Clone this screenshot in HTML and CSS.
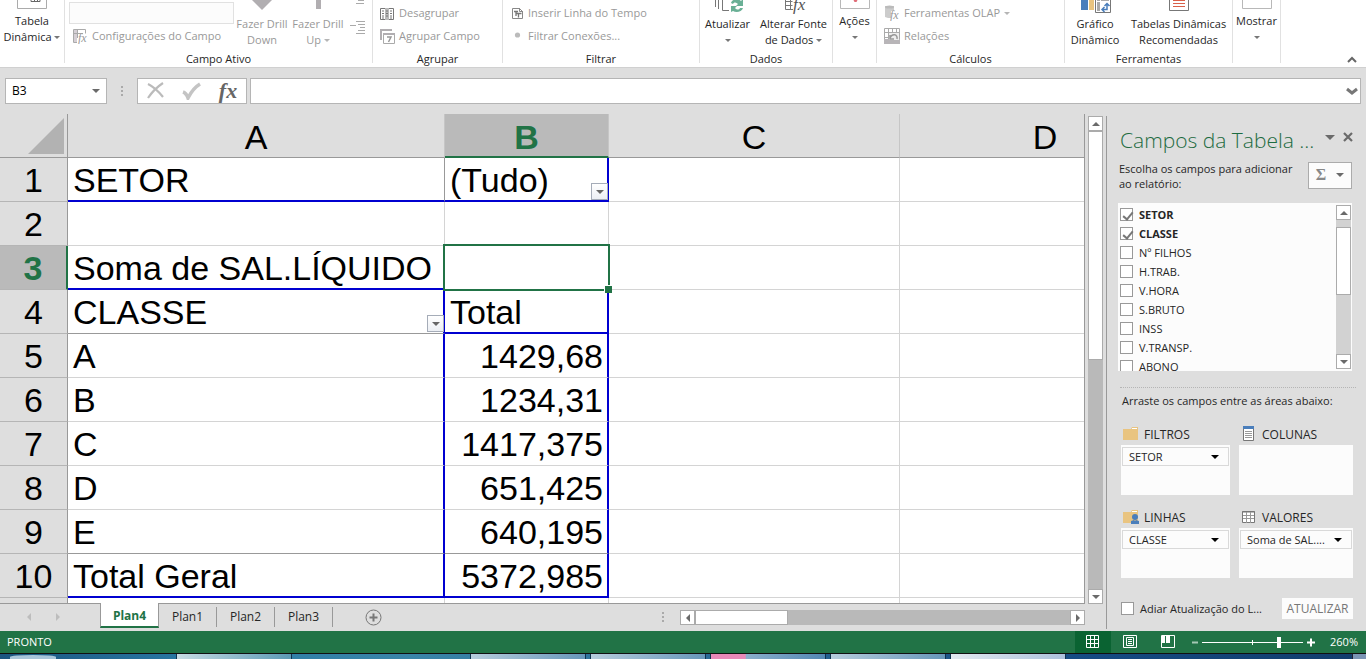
FILE: index.html
```html
<!DOCTYPE html>
<html lang="pt-BR">
<head>
<meta charset="utf-8">
<title>Tabela Dinâmica</title>
<link rel="stylesheet" href="styles.css">
</head>
<body>
<header class="ribbon">
  <section class="group g-pivot">
    <div class="group-body">
      <button class="big"><svg width="30" height="13" viewBox="0 0 30 13"><path d="M.5 0v8.500h29V0" fill="none" stroke="#ababab"/><path d="M14 0v1.500h9V0M17.500 0v2M20.500 0v2" fill="none" stroke="#666"/></svg><span>Tabela</span><span>Dinâmica <i class="caret"></i></span></button>
    </div>
  </section>
  <section class="group g-field">
    <div class="group-body">
      <div class="rows">
        <input class="field-name" aria-label="Campo Ativo" disabled>
        <button class="small" disabled><svg width="15" height="15" viewBox="0 0 15 15"><path d="M.5 13.500V.5h12v4M.5 13.500H4M4.500 0v9M0 4.500h10" fill="none" stroke="#aaa"/><path d="M1 1h3v3H1zM1 5h3v8H1z" fill="#d5cfd5"/><text x="5" y="13" class="fx-s">fx</text></svg>Configurações do Campo</button>
      </div>
      <button class="big" disabled><svg width="20" height="16" viewBox="0 0 20 16"><path d="M0 0h20L10 10z" fill="#b1aeb1"/></svg><span>Fazer Drill</span><span>Down</span></button>
      <button class="big" disabled><svg width="20" height="16" viewBox="0 0 20 16"><path d="M8 0h5v9H8z" fill="#b1aeb1"/></svg><span>Fazer Drill</span><span>Up <i class="caret"></i></span></button>
      <svg class="levels" width="16" height="36" viewBox="0 0 16 36"><path d="M8 .5h6M6 3.500h8M6 21.500h9M8 24.500h7M10 27.500h5M8 30.500h7M6 33.500h9M0 25.500h6" stroke="#aaa" fill="none"/></svg>
    </div>
    <h2>Campo Ativo</h2>
  </section>
  <section class="group g-group">
    <div class="group-body"><div class="rows">
      <button class="small" disabled><svg width="15" height="15" viewBox="0 0 15 15"><path d="M.5 2.500h13v11H.5z" fill="#fff" stroke="#777"/><path d="M5 2h4v12H5z" fill="#bbb"/><path d="M2 5h2M2 7.500h2M2 10h2M2 12h2M6 5h2M6 7.500h2M6 10h2M10 5h2M10 7.500h2M10 10h2M10 12h2" stroke="#777"/></svg>Desagrupar</button>
      <button class="small" disabled><svg width="15" height="15" viewBox="0 0 15 15"><path d="M1 11V1h11" fill="none" stroke="#b1aeb1" stroke-width="2"/><path d="M3.500 4.500h11v10h-11z" fill="#fff" stroke="#aaa"/><path d="M3 4h12v2H3z" fill="#b1aeb1"/><path d="M7 8h4l-2.500 5" fill="none" stroke="#999" stroke-width="1.500"/></svg>Agrupar Campo</button>
    </div></div>
    <h2>Agrupar</h2>
  </section>
  <section class="group g-filter">
    <div class="group-body"><div class="rows">
      <button class="small" disabled><svg width="12" height="13" viewBox="0 0 12 13"><path d="M.5 1.500h7l3 3v7H.5zM7.500 1v3.500H11" fill="#fff" stroke="#888"/><path d="M2 4.500h4M4 4v5M4 6.500h5.500M6.500 6v4.500" stroke="#777" stroke-width="1.300"/></svg>Inserir Linha do Tempo</button>
      <button class="small" disabled><svg width="12" height="13" viewBox="0 0 12 13"><circle cx="5.500" cy="5" r="2.600" fill="#bbb"/></svg>Filtrar Conexões...</button>
    </div></div>
    <h2>Filtrar</h2>
  </section>
  <section class="group g-data">
    <div class="group-body">
      <button class="big"><svg width="34" height="16" viewBox="0 0 34 16"><path d="M4.500 0v7M7.500 0v9M11.500 0v10.500H18" fill="none" stroke="#777"/><path d="M20 3c1-4 7-5 10-2l2-2v7h-7l2-2c-2-2-4-2-5 0z" fill="#6ab096"/><path d="M32 8c-1 4-7 5-10 3l-2 1V6h6l-2 2c2 2 4 2 5 0z" fill="#6ab096"/></svg><span>Atualizar</span><span><i class="caret"></i></span></button>
      <button class="big"><svg width="24" height="16" viewBox="0 0 24 16"><path d="M3.500 0v9.500H11M3.500 1.500h7M3.500 5.500h7M8.500 0v10" fill="none" stroke="#777"/><text x="11" y="10" class="fx-m">fx</text></svg><span>Alterar Fonte</span><span>de Dados <i class="caret"></i></span></button>
    </div>
    <h2>Dados</h2>
  </section>
  <section class="group g-actions">
    <div class="group-body">
      <button class="big"><svg width="30" height="13" viewBox="0 0 30 13"><path d="M.5 0v8.500h29V0" fill="none" stroke="#b8b8b8"/><path d="M13.500 0h4l-1 2h-2z" fill="#e06c77"/></svg><span>Ações</span><span><i class="caret"></i></span></button>
    </div>
  </section>
  <section class="group g-calc">
    <div class="group-body"><div class="rows">
      <button class="small" disabled><svg width="16" height="16" viewBox="0 0 16 16"><path d="M1 1h9v12H4L1 12z" fill="#ccc"/><ellipse cx="5.500" cy="2" rx="4.500" ry="1.500" fill="#bbb"/><path d="M7 6h9v10H7z" fill="#fff"/><text x="6" y="14" class="fx-s">fx</text></svg>Ferramentas OLAP <i class="caret"></i></button>
      <button class="small" disabled><svg width="16" height="16" viewBox="0 0 16 16"><path d="M.5.5h15v15H.5zM4.500 0v16M0 4.500h16M0 9.500h4M8.500 0v4M12.500 0v4" fill="none" stroke="#aaa"/><path d="M0 11h16v5H0z" fill="#b8b5b8"/><path d="M5 5h10v7H5z" fill="#eee"/><path d="M6 7v4h4M6 10c2-5 8-4 7 1" fill="none" stroke="#999" stroke-width="1.500"/></svg>Relações</button>
    </div></div>
    <h2>Cálculos</h2>
  </section>
  <section class="group g-tools">
    <div class="group-body">
      <button class="big"><svg width="34" height="16" viewBox="0 0 34 16"><path d="M3 0h7v10H3z" fill="#4a7ebb"/><path d="M11 0h5v10h-5z" fill="#e9c480"/><path d="M17.500 0v12.500h15V0" fill="#fff" stroke="#777"/><path d="M19 2h3v9h-3zM19 0h3v1h-3zM23 0h8v1h-8z" fill="#aaa"/><path d="M24 9.500h5V4M26.500 7L24 9.500l2.500 2.500M26.500 6L29 3.500 31.500 6" fill="none" stroke="#4a7ebb" stroke-width="1.500"/></svg><span>Gráfico</span><span>Dinâmico</span></button>
      <button class="big"><svg width="20" height="16" viewBox="0 0 20 16"><path d="M.5 0v10.500h19V0" fill="#fff" stroke="#777"/><path d="M4 .5h12M4 3.500h12M4 6.500h12" stroke="#d9604a"/></svg><span>Tabelas Dinâmicas</span><span>Recomendadas</span></button>
    </div>
    <h2>Ferramentas</h2>
  </section>
  <section class="group g-show">
    <div class="group-body">
      <button class="big"><svg width="30" height="13" viewBox="0 0 30 13"><path d="M.5 0v8.500h29V0" fill="none" stroke="#b8b8b8"/></svg><span>Mostrar</span><span><i class="caret"></i></span></button>
    </div>
  </section>
  <button class="collapse" aria-label="Recolher a Faixa de Opções"><svg width="10" height="7" viewBox="0 0 10 7"><path d="M1 6l4-4 4 4" fill="none" stroke="#666" stroke-width="2"/></svg></button>
</header>

<div class="formula-bar">
  <div class="name-box"><input aria-label="Caixa de Nome" value="B3"><button aria-label="Nomes"><i class="tri"></i></button></div>
  <i class="dots"></i>
  <div class="entry">
    <button aria-label="Cancelar"><svg width="18" height="18" viewBox="0 0 18 18"><path d="M1 2c6 3 11 8 15 13M16 1C10 5 5 10 1 16" fill="none" stroke="#bbb" stroke-width="2.200"/></svg></button>
    <button aria-label="Inserir"><svg width="20" height="18" viewBox="0 0 20 18"><path d="M1 10c3 1 4 3 5 6C9 10 13 5 18 2" fill="none" stroke="#c4c4c4" stroke-width="3.500"/></svg></button>
    <button aria-label="Inserir Função" class="fx">fx</button>
  </div>
  <div class="formula"><input aria-label="Barra de Fórmulas"><button aria-label="Expandir"><svg width="12" height="9" viewBox="0 0 12 9"><path d="M1 2l5 4 5-4" fill="none" stroke="#777" stroke-width="3"/></svg></button></div>
</div>

<main class="work">
  <div class="book">
    <div class="sheet-area">
      <div class="sheet">
        <table>
          <colgroup><col class="c-head"><col class="c-a"><col class="c-b"><col class="c-c"><col class="c-d"></colgroup>
          <thead><tr><th class="corner"><svg width="36" height="36" viewBox="0 0 36 36"><path d="M36 0v36H0z" fill="#b2b2b2"/></svg></th><th>A</th><th class="active">B</th><th>C</th><th>D</th></tr></thead>
          <tbody>
          <tr><th>1</th><td class="bb gr">SETOR</td><td class="bb br">(Tudo)<button class="filter" aria-label="Filtrar SETOR"><i class="caret"></i></button></td><td></td><td></td></tr>
          <tr><th>2</th><td></td><td></td><td></td><td></td></tr>
          <tr><th class="active">3</th><td class="bb">Soma de SAL.LÍQUIDO</td><td class="selected"><i class="cursor"></i></td><td></td><td></td></tr>
          <tr><th>4</th><td class="br gb">CLASSE<button class="filter" aria-label="Filtrar CLASSE"><i class="caret"></i></button></td><td class="bb br">Total</td><td></td><td></td></tr>
          <tr><th>5</th><td class="br">A</td><td class="br num">1429,68</td><td></td><td></td></tr>
          <tr><th>6</th><td class="br">B</td><td class="br num">1234,31</td><td></td><td></td></tr>
          <tr><th>7</th><td class="br">C</td><td class="br num">1417,375</td><td></td><td></td></tr>
          <tr><th>8</th><td class="br">D</td><td class="br num">651,425</td><td></td><td></td></tr>
          <tr><th>9</th><td class="br gb">E</td><td class="br gb num">640,195</td><td></td><td></td></tr>
          <tr><th>10</th><td class="bb br">Total Geral</td><td class="bb br num">5372,985</td><td></td><td></td></tr>
          <tr><th></th><td></td><td></td><td></td><td></td></tr>
          </tbody>
        </table>
      </div>
      <div class="vscroll">
        <button aria-label="Para cima"><i class="tri up"></i></button><div class="thumb"></div><div class="track"></div><button aria-label="Para baixo"><i class="tri"></i></button>
      </div>
    </div>
    <nav class="tabs">
      <div class="tab-nav"><svg width="36" height="8" viewBox="0 0 36 8"><path d="M5 0v8L1 4zM30 0v8l4-4z" fill="#bdbdbd"/></svg></div>
      <button class="tab current">Plan4</button><button class="tab">Plan1</button><button class="tab">Plan2</button><button class="tab">Plan3</button>
      <button class="add" aria-label="Nova planilha"><svg width="17" height="17" viewBox="0 0 17 17"><circle cx="8.500" cy="8.500" r="7.500" fill="none" stroke="#777"/><path d="M8.500 4.500v8M4.500 8.500h8" stroke="#777" stroke-width="2"/></svg></button>
      <i class="dots"></i>
      <div class="hscroll">
        <button aria-label="Esquerda"><i class="tri left"></i></button><div class="thumb"></div><div class="track"></div><button aria-label="Direita"><i class="tri right"></i></button>
      </div>
    </nav>
  </div>

  <aside class="pane">
    <div class="pane-title"><h1>Campos da Tabela ...</h1><button aria-label="Opções"><i class="tri"></i></button><button aria-label="Fechar"><svg width="10" height="10" viewBox="0 0 10 10"><path d="M1 1l8 8M9 1L1 9" stroke="#6a6a6a" stroke-width="2.200"/></svg></button></div>
    <div class="intro"><p>Escolha os campos para adicionar ao relatório:</p><button class="sigma" aria-label="Ferramentas"><span>Σ</span><i class="tri"></i></button></div>
    <div class="fields">
      <div class="field-list">
        <label class="on"><input type="checkbox" checked>SETOR</label>
        <label class="on"><input type="checkbox" checked>CLASSE</label>
        <label><input type="checkbox">Nº FILHOS</label>
        <label><input type="checkbox">H.TRAB.</label>
        <label><input type="checkbox">V.HORA</label>
        <label><input type="checkbox">S.BRUTO</label>
        <label><input type="checkbox">INSS</label>
        <label><input type="checkbox">V.TRANSP.</label>
        <label><input type="checkbox">ABONO</label>
      </div>
      <div class="vscroll list-scroll"><button aria-label="Para cima"><i class="tri up"></i></button><div class="track top"></div><div class="thumb"></div><div class="track"></div><button aria-label="Para baixo"><i class="tri"></i></button></div>
    </div>
    <p class="drag">Arraste os campos entre as áreas abaixo:</p>
    <div class="areas">
      <section><h3><svg width="18" height="16" viewBox="0 0 18 16"><path d="M1 3h8l1-2h6v13H1z" fill="#e9c480"/><path d="M10 2.500h5" stroke="#fff"/></svg>FILTROS</h3><div class="zone"><button class="chip"><span>SETOR</span><i class="tri"></i></button></div></section>
      <section><h3 class="right-head"><svg width="16" height="16" viewBox="0 0 16 16"><path d="M1.500.5h10v14h-10z" fill="#fff" stroke="#777"/><path d="M1 0h11v3H1z" fill="#4a7ebb"/><path d="M3 5.500h7M3 7.500h7M3 9.500h7M3 11.500h7" stroke="#999"/></svg>COLUNAS</h3><div class="zone"></div></section>
      <section><h3><svg width="18" height="16" viewBox="0 0 18 16"><path d="M1 3h8l1-2h6v13H1z" fill="#e9c480"/><path d="M10 2.500h5" stroke="#fff"/><circle cx="13" cy="8" r="3" fill="#4a7ebb"/><path d="M9 15v-3l3-1 1 1 1-1 3 1v3z" fill="#4a7ebb"/></svg>LINHAS</h3><div class="zone"><button class="chip"><span>CLASSE</span><i class="tri"></i></button></div></section>
      <section><h3 class="right-head"><svg width="16" height="16" viewBox="0 0 16 16"><path d="M.5 2.500h12v11H.5z" fill="#fff" stroke="#777"/><path d="M0 3h13" stroke="#777"/><path d="M1 6.500h11M1 9.500h11M4.500 3v11M8.500 3v11" stroke="#999"/></svg>VALORES</h3><div class="zone"><button class="chip"><span>Soma de SAL....</span><i class="tri"></i></button></div></section>
    </div>
    <div class="defer"><label><input type="checkbox">Adiar Atualização do L...</label><button>ATUALIZAR</button></div>
  </aside>
</main>

<footer class="status">
  <span class="ready">PRONTO</span>
  <button class="view current" aria-label="Normal"><svg width="14" height="14" viewBox="0 0 14 14"><path d="M.5.5h12v12H.5zM4.500 0v13M8.500 0v13M0 4.500h13M0 8.500h13" fill="none" stroke="#fff"/></svg></button>
  <button class="view" aria-label="Layout da Página"><svg width="14" height="14" viewBox="0 0 14 14"><path d="M.5.5h13v12H.5zM3.500 2.500h7v8h-7zM5 4.500h4M5 6.500h4M5 8.500h4" fill="none" stroke="#fff"/></svg></button>
  <button class="view" aria-label="Quebra de Página"><svg width="14" height="14" viewBox="0 0 14 14"><path d="M.5.5h13v12H.5z" fill="none" stroke="#fff"/><path d="M1 1h3v7H1zM5 1h4v7H5z" fill="#fff"/></svg></button>
  <button class="step" aria-label="Reduzir"><svg width="8" height="9" viewBox="0 0 8 9"><path d="M1 4.500h6" stroke="#a5c8b4" stroke-width="2"/></svg></button>
  <input class="zoom" type="range" min="0" max="100" value="77" aria-label="Zoom">
  <button class="step" aria-label="Ampliar"><svg width="8" height="9" viewBox="0 0 8 9"><path d="M0 4.500h8M4 .5v8" stroke="#fff" stroke-width="2"/></svg></button>
  <span class="percent">260%</span>
</footer>
<div class="taskbar"><i class="orb"></i><i class="task first"></i><i class="task second"></i><i class="task"></i><i class="task pink"></i><i class="task"></i><i class="task pale"></i><i class="desk"></i></div>
</body>
</html>
```

FILE: styles.css
```css
* { box-sizing: border-box; }
body {
  margin: 0;
  height: 100vh;
  display: flex;
  flex-direction: column;
  overflow: hidden;
  background: #dedede;
  color: #262626;
  font: 12px/16px "Open Sans", "Noto Sans", sans-serif;
}
button, input { font: inherit; color: inherit; border-radius: 0; }
button { border: 0; padding: 0; background: none; display: flex; align-items: center; justify-content: center; }
svg { display: block; flex: none; }
h1, h2, h3, p { margin: 0; font-weight: 400; }

.caret, .tri { display: inline-block; flex: none; width: 0; height: 0; border: solid transparent; }
.caret { border-width: 3px 3px 0; border-top-color: #777; vertical-align: 2px; }
.tri { border-width: 4px 4px 0; border-top-color: #6a6a6a; }
.tri.up { border-width: 0 4px 4px; border-color: transparent; border-bottom-color: #6a6a6a; }
.tri.left { border-width: 4px 4px 4px 0; border-color: transparent; border-right-color: #6a6a6a; }
.tri.right { border-width: 4px 0 4px 4px; border-color: transparent; border-left-color: #6a6a6a; }
.dots { flex: none; width: 2px; height: 11px; background: repeating-linear-gradient(#aaa 0 2px, transparent 2px 4px); }

/* Ribbon */
.ribbon { flex: none; display: flex; align-items: flex-start; background: #fff; border-bottom: 1px solid #d0d0d0; padding-bottom: 4px; font-size: 11px; }
.group { flex: none; height: 63px; border-right: 1px solid #e1e1e1; display: flex; flex-direction: column; justify-content: space-between; }
.group-body { display: flex; align-items: flex-start; }
.group h2 { font-size: 11px; line-height: 14px; text-align: center; margin-bottom: -3px; }
.g-pivot { width: 65px; }
.g-field { width: 308px; }
.g-group { width: 130px; }
.g-filter { width: 197px; }
.g-data { width: 133px; }
.g-actions { width: 44px; }
.g-calc { width: 188px; }
.g-tools { width: 168px; }
.g-show { width: 48px; }
.big { flex: 1 0 auto; flex-direction: column; justify-content: flex-start; white-space: nowrap; }
.big span { height: 16px; }
.g-field .big { flex: none; width: 56px; }
.rows { display: flex; flex-direction: column; padding-top: 2px; gap: 1px; }
.small { height: 22px; justify-content: flex-start; gap: 4px; white-space: nowrap; }
button:disabled { color: #999; }
button:disabled .caret { border-top-color: #b5b5b5; }
.g-field .rows { flex: none; width: 169px; padding-left: 4px; }
.g-field .rows .small { padding-left: 4px; }
.field-name { width: 100%; height: 22px; border: 1px solid #e1e1e1; background: #fcfcfc; }
.levels { margin-left: 4px; }
.g-group .rows { padding-left: 7px; }
.g-filter .rows { padding-left: 9px; }
.g-calc .rows { padding-left: 7px; }
.fx-s { font: italic 12px "Liberation Serif", serif; fill: #999; }
.fx-m { font: italic 17px "Liberation Serif", serif; fill: #555; }
.collapse { margin: 56px 9px 0 auto; }

/* Formula bar */
.formula-bar { flex: none; display: flex; align-items: center; padding: 10px 5px; }
.name-box, .entry, .formula { display: flex; height: 26px; background: #fff; border: 1px solid #b5b5b5; }
.name-box { width: 102px; }
.name-box input, .formula input { flex: 1; min-width: 0; border: 0; padding: 0 6px; background: none; outline: 0; font-size: 12px; color: #000; }
.name-box button { width: 20px; }
.formula-bar .dots { margin: 0 14px; }
.entry { width: 110px; margin-right: 3px; }
.entry button { flex: 1; }
.entry .fx { font: italic bold 22px/22px "Liberation Serif", serif; color: #666; }
.formula { flex: 1; }
.formula button { width: 16px; }

/* Worksheet */
.work { flex: 1; min-height: 0; display: flex; }
.book { flex: 1; min-width: 0; display: flex; flex-direction: column; }
.sheet-area { flex: 1; min-height: 0; display: flex; gap: 3px; }
.sheet { flex: 1; min-width: 0; overflow: hidden; border-right: 1px solid #999; border-bottom: 1px solid #999; }
.sheet table { width: 1190px; table-layout: fixed; border-collapse: separate; border-spacing: 0; font: 34px/38px "Liberation Sans", Arial, sans-serif; color: #000; }
.c-head { width: 68px; }
.c-a { width: 377px; }
.c-b { width: 164px; }
.c-c, .c-d { width: 291px; }
.sheet th, .sheet td { height: 44px; border: solid #d4d4d4; border-width: 0 1px 1px 0; white-space: nowrap; }
.sheet th { padding: 0; font-weight: 400; background: #dedede; border-color: #b5b5b5; }
.sheet thead th { padding-top: 2px; border-bottom-color: #999; border-right-color: #c6c6c6; }
.sheet tbody th, .sheet thead .corner { border-right-color: #999; }
.sheet thead .corner { padding: 0; }
.sheet .corner svg { margin: 0 3px 0 auto; }
.sheet th.active { background: #bababa; color: #217346; font-weight: 700; }
.sheet thead th.active { padding-top: 3px; border-bottom: 2px solid #217346; }
.sheet tbody th.active { border-right: 2px solid #217346; }
.sheet td { position: relative; padding: 0 5px; background: #fff; }
.sheet td.gr { border-right-color: #999; }
.sheet td.gb { border-bottom-color: #999; }
.sheet td.bb { padding-top: 1px; border-bottom: 2px solid #0000d0; }
.sheet td.br { border-right: 2px solid #0000d0; }
.sheet td.num { text-align: right; padding-right: 4px; }
.filter { position: absolute; right: -1px; bottom: 1px; width: 17px; height: 17px; border: 1px solid #a5acb8; background: linear-gradient(#fff, #eceff4); }
.bb .filter { bottom: 0; }
.filter .caret { border-width: 4px 4px 0; border-top-color: #666; }
.cursor { position: absolute; z-index: 1; inset: -2px; border: 2px solid #217346; }
.cursor::after { content: ""; position: absolute; right: -4px; bottom: -4px; width: 7px; height: 7px; background: #217346; border: solid #fff; border-width: 1px 0 0 1px; }

/* Scrollbars */
.vscroll, .hscroll { flex: none; display: flex; }
.vscroll { flex-direction: column; width: 15px; }
.vscroll button, .hscroll button { flex: none; width: 15px; height: 15px; background: #fff; border: 1px solid #ababab; }
.thumb { flex: none; background: #fff; border: 1px solid #ababab; }
.track { flex: 1; background: #b9b9b9; }
.sheet-area .vscroll { margin: 2px 3px 0 0; }
.sheet-area .thumb { height: 229px; }

.tabs { flex: none; height: 27px; display: flex; align-items: flex-start; }
.tab-nav { width: 100px; padding: 9px 0 0 26px; }
.tab { width: 58px; height: 20px; margin-top: 3px; border-right: 1px solid #999; }
.tab.current { width: 59px; height: 25px; margin-top: -1px; padding-top: 3px; position: relative; background: #fff; border-left: 1px solid #999; border-bottom: 2px solid #217346; color: #217346; font-weight: 700; }
.add { margin: 5px 0 0 32px; }
.tabs .dots { margin: 8px 16px 0 auto; }
.hscroll { width: 405px; margin: 6px 21px 0 0; }
.hscroll .thumb { width: 93px; }

/* Field pane */
.pane { flex: none; width: 260px; margin: 2px 0 2px; padding: 10px 13px 0 12px; border-left: 1px solid #999; font-size: 11px; line-height: 15px; }
.pane-title { display: flex; align-items: center; height: 28px; margin-left: 1px; }
.pane-title h1 { flex: 1; white-space: nowrap; font-size: 21px; line-height: 28px; font-weight: 300; color: #1d6b41; }
.pane-title button { margin: -6px 0 0 8px; }
.pane-title .tri { border-width: 5px 5px 0; }
.intro { display: flex; justify-content: space-between; align-items: center; height: 38px; margin-top: 2px; }
.intro p { width: 184px; padding-top: 2px; }
.sigma { width: 44px; height: 27px; margin-right: 1px; gap: 10px; background: #fcfcfc; border: 1px solid #ababab; font: bold 16px "Liberation Serif", serif; color: #888; }
.fields { display: flex; justify-content: space-between; height: 168px; margin: 9px 1px 0 -1px; padding: 2px 1px 2px 2px; background: #fcfcfc; }
.field-list { height: 166px; overflow: hidden; }
.field-list label { display: flex; align-items: center; gap: 6px; height: 19px; }
.field-list .on { font-weight: 700; }
.pane input { appearance: none; flex: none; width: 13px; height: 13px; margin: 0; border: 1px solid #999; background: #fff; position: relative; }
.pane input:checked::after { content: ""; position: absolute; left: 4px; top: 1px; width: 4px; height: 8px; border: solid #777; border-width: 0 2px 2px 0; rotate: 40deg; }
.list-scroll .track { background: #d2d2d2; }
.list-scroll .track.top { flex: none; height: 7px; }
.list-scroll .thumb { height: 68px; }
.drag { margin: 16px -3px 0 1px; padding: 5px 0 0 2px; border-top: 1px dotted #b5b5b5; white-space: nowrap; }
.areas { display: grid; grid-template-columns: 109px 1fr; gap: 12px 9px; margin: 15px 0 0 2px; }
.areas h3 { display: flex; align-items: center; gap: 4px; height: 20px; margin-bottom: 1px; padding-left: 1px; font-size: 12px; }
.areas .right-head { padding-left: 3px; }
.zone { height: 50px; padding: 2px 1px; background: #fcfcfc; }
.areas { padding-top: 1px; }
.chip { width: 100%; height: 19px; padding: 0 9px 0 6px; border: 1px solid #d9d9d9; justify-content: space-between; white-space: nowrap; }
.chip .tri { border-top-color: #000; }
.defer { display: flex; align-items: center; justify-content: space-between; margin: 20px 0 0 2px; white-space: nowrap; }
.defer label { display: flex; align-items: center; gap: 6px; }
.defer button { width: 71px; height: 21px; background: #fcfcfc; color: #777; font-size: 12px; }

/* Status bar */
.status { flex: none; display: flex; align-items: center; height: 22px; background: #217346; color: #fff; font-size: 11px; }
.ready { flex: 1; padding-left: 7px; }
.view { width: 38px; height: 22px; }
.view.current { width: 36px; background: #0a6332; }
.step { margin: 0 4px; }
.view + .step { margin: 0 3px 0 4px; }
.zoom { appearance: none; width: 101px; height: 12px; margin: 0; background: linear-gradient(#fff, #fff) center / 1px 5px no-repeat, linear-gradient(#fff, #fff) center / 100% 1px no-repeat; }
.zoom::-webkit-slider-thumb { appearance: none; width: 4px; height: 11px; background: #fff; }
.percent { width: 47px; padding-right: 8px; text-align: right; }

/* Taskbar */
.taskbar { flex: none; display: flex; height: 6px; gap: 4px; border-top: 1px solid #111; background: linear-gradient(90deg, #1c5580, #2a7ba6 15%, #3a85a8 30%, #2a6c98 50%, #154a82 80%, #123c6c); }
.orb { width: 46px; margin: 1px 116px 0 10px; border-radius: 50% 50% 0 0; background: #a9c6da; }
.task { width: 116px; border: solid #10324e; border-width: 0 1px; background: linear-gradient(90deg, #b7cddd, #6797ba); }
.task.first { background: linear-gradient(90deg, #c8dce4, #5c9ab5); }
.task.second { margin-left: 174px; }
.task.pink { background: linear-gradient(90deg, #e889b8 30%, #8aaecb 31%, #5388b4); }
.task.pale { background: linear-gradient(90deg, #e2e9f0, #adc2dc); }
.desk { width: 14px; margin-left: auto; background: #7b94b4; border-left: 1px solid #223; }
```
